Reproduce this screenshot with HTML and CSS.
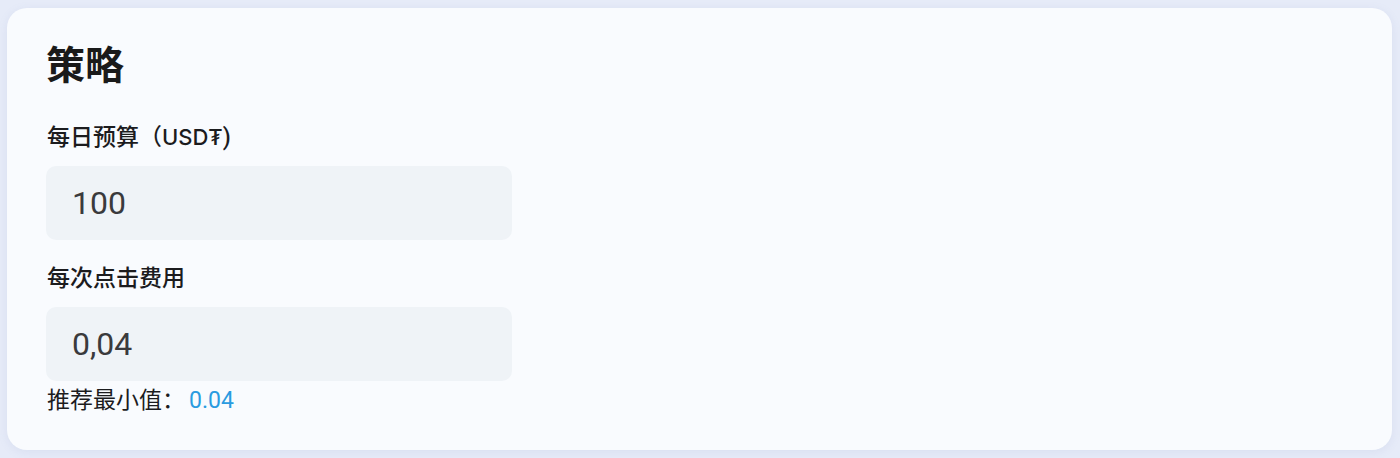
FILE: index.html
```html
<!DOCTYPE html>
<html lang="zh-CN">
<head>
    <meta charset="UTF-8">
    <meta name="viewport" content="width=device-width, initial-scale=1.0">
    <title>策略</title>
    <link rel="stylesheet" href="styles.css">
</head>
<body>
    <div class="card">
        <h1>策略</h1>

        <div class="field">
            <label for="budget">每日预算（<span class="unit">USD₮</span>)</label>
            <input id="budget" class="input" type="text" value="100">
        </div>

        <div class="field">
            <label for="cpc">每次点击费用</label>
            <input id="cpc" class="input" type="text" value="0,04">
            <p class="hint">推荐最小值：<span class="hint-value">0.04</span></p>
        </div>
    </div>
</body>
</html>
```

FILE: styles.css
```css
/* Base */
body {
    font-family: Roboto, "Noto Sans CJK SC", sans-serif;
    margin: 0;
    padding: 8px 8px 8px 7px;
    background-color: #e6ebf8;
    color: #1c1c1e;
}
/* Card */
.card {
    background-color: #f9fbfe;
    border-radius: 20px;
    box-shadow: 0 2px 10px rgba(120, 140, 190, 0.12);
    padding: 34px 39px 20px;
    height: 442px;
    box-sizing: border-box;
}
.card h1 {
    font-size: 39px;
    font-weight: 700;
    line-height: 48px;
    margin: 0 0 32px;
    color: #1a1a1a;
}
/* Form fields */
.field {
    display: flex;
    flex-direction: column;
    margin-bottom: 24px;
}
.field label {
    font-size: 23px;
    font-weight: 500;
    line-height: 30px;
    margin-bottom: 13px;
    padding-left: 1px;
}
.field label .unit {
    font-family: Inter, sans-serif;
    font-size: 22px;
}
.input {
    width: 466px;
    height: 74px;
    box-sizing: border-box;
    border: none;
    border-radius: 10px;
    background-color: #eff3f7;
    padding: 0 26px;
    font-family: inherit;
    font-size: 32px;
    color: #3a3a3c;
    outline: none;
}
.hint {
    font-size: 23px;
    line-height: 28px;
    margin: 6px 0 0;
    padding-left: 1px;
}
.hint-value {
    color: #2a9be0;
    margin-left: 4px;
}
```
